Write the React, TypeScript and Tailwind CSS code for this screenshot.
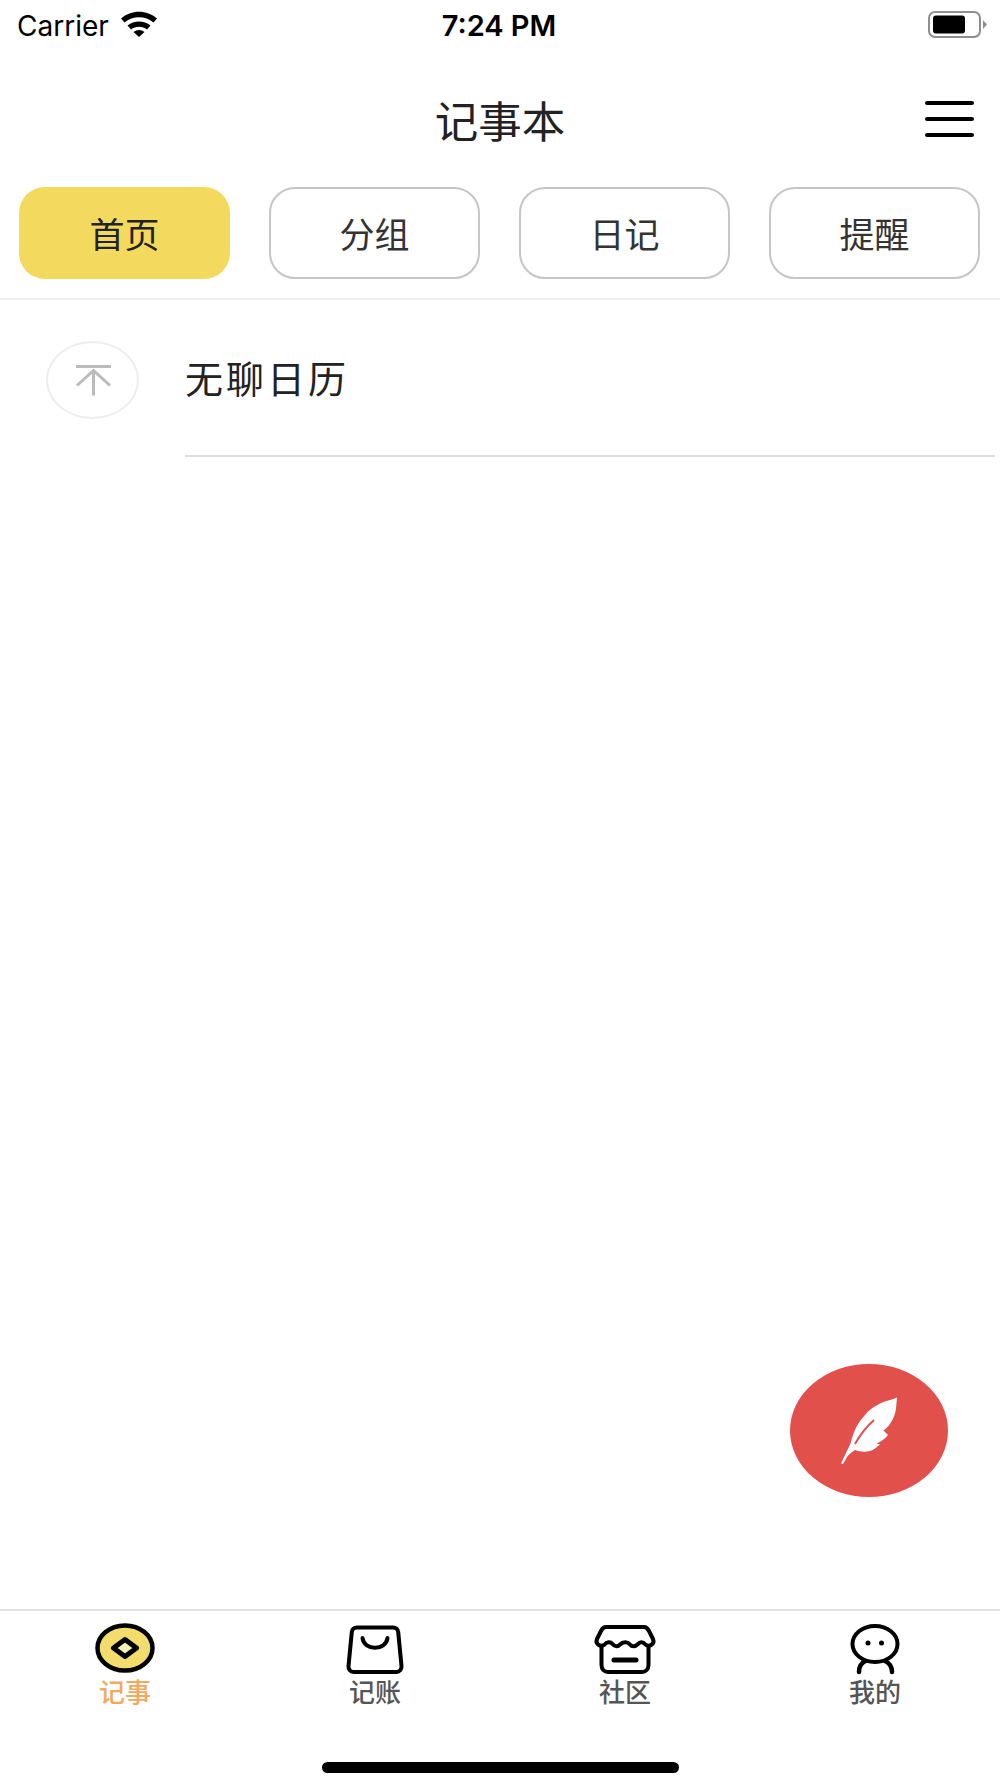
// 记事本首页
const tabs = [
  { label: '首页', active: true },
  { label: '分组', active: false },
  { label: '日记', active: false },
  { label: '提醒', active: false },
];

function WifiIcon() {
  return (
    <svg width="38" height="28" viewBox="0 0 38 28" className="ml-[11px]">
      <path d="M1 9.5C11 0.5 27 0.5 37 9.5L33.5 13.5C25.5 6.5 12.5 6.5 4.5 13.5Z" fill="#000" />
      <path d="M7.5 16.5C14 11 24 11 30.5 16.5L27 20.5C22.5 16.8 15.5 16.8 11 20.5Z" fill="#000" />
      <path d="M13.5 23C16.8 20.3 21.2 20.3 24.5 23L19 28Z" fill="#000" />
    </svg>
  );
}

function BatteryIcon() {
  return (
    <svg width="60" height="28" viewBox="0 0 60 28" className="-mr-[7px]">
      <rect x="1" y="1" width="51" height="25" rx="6" fill="none" stroke="#8e8e8e" strokeWidth="2" />
      <rect x="5" y="4.5" width="32" height="18" rx="3" fill="#000" />
      <path d="M55 9L59 13.5L55 18Z" fill="#8e8e8e" />
    </svg>
  );
}

function CoinIcon() {
  return (
    <svg width="64" height="54" viewBox="0 0 64 54">
      <ellipse cx="32" cy="26" rx="27.5" ry="22.5" fill="#f2dd6c" stroke="#000" strokeWidth="4.5" />
      <path d="M32 17.5L43.5 26L32 34.5L20.5 26Z" fill="#f9f0b8" stroke="#000" strokeWidth="5" strokeLinejoin="round" />
    </svg>
  );
}

function BagIcon() {
  return (
    <svg width="64" height="54" viewBox="0 0 64 54">
      <path d="M14 5.5H50C53 5.5 55 7.5 55.2 10L58.5 44C58.8 47.5 56.5 50 53.5 50H10.5C7.5 50 5.2 47.5 5.5 44L8.8 10C9 7.5 11 5.5 14 5.5Z" fill="none" stroke="#000" strokeWidth="4" strokeLinejoin="round" />
      <path d="M19.5 16C21 29 43 29 44.5 16" fill="none" stroke="#000" strokeWidth="4" strokeLinecap="round" />
    </svg>
  );
}

function StoreIcon() {
  return (
    <svg width="64" height="54" viewBox="0 0 64 54">
      <path d="M13 5H51C54 5 55 7 56 9L60 17C62 22 57 25 53 23C50 19.5 47 19.5 45 22C42 25 39 25 37 22.5C34.5 19.5 30 19.5 27 22.5C25 25 22 25 19.5 22C17.5 19.5 14 19.5 11 23C7 25 2 22 4 17L8 9C9 7 10 5 13 5Z" fill="none" stroke="#000" strokeWidth="4" strokeLinejoin="round" />
      <path d="M8.5 24V43C8.5 47.5 11.5 50 15 50H49C52.5 50 55.5 47.5 55.5 43V24" fill="none" stroke="#000" strokeWidth="4" />
      <path d="M21 38H43" fill="none" stroke="#000" strokeWidth="5" strokeLinecap="round" />
    </svg>
  );
}

function PersonIcon() {
  return (
    <svg width="64" height="54" viewBox="0 0 64 54">
      <ellipse cx="32" cy="22" rx="22.5" ry="18" fill="none" stroke="#000" strokeWidth="4" />
      <circle cx="25" cy="21" r="2.5" fill="#000" />
      <circle cx="38.5" cy="21" r="2.5" fill="#000" />
      <path d="M16 50C16 44 18 41 22.5 39M49 50C49 44 46.5 41 42 39" fill="none" stroke="#000" strokeWidth="4.5" strokeLinecap="round" />
    </svg>
  );
}

const navItems = [
  { label: '记事', icon: CoinIcon, color: 'text-[#f0a95f]' },
  { label: '记账', icon: BagIcon, color: 'text-[#555555]' },
  { label: '社区', icon: StoreIcon, color: 'text-[#555555]' },
  { label: '我的', icon: PersonIcon, color: 'text-[#555555]' },
];

export default function App() {
  return (
    <div className="relative w-[1000px] h-[1778px] bg-white flex flex-col overflow-hidden font-['Inter','Noto_Sans_CJK_SC',sans-serif]">
      {/* 状态栏 */}
      <div className="h-[50px] pl-[17px] pr-[19px] pt-[9px] grid grid-cols-3 items-start text-black text-[28px] leading-[34px]">
        <div className="flex items-start">
          <span>Carrier</span>
          <WifiIcon />
        </div>
        <div className="text-center text-[29px] font-semibold">7:24 PM</div>
        <div className="flex justify-end pt-[2px]">
          <BatteryIcon />
        </div>
      </div>

      {/* 标题 */}
      <div className="h-[137px] relative flex items-start justify-center pt-[45px]">
        <span className="text-[43.5px] leading-[50px] text-[#222222] font-['Noto_Sans_CJK_SC',sans-serif]">记事本</span>
        <div className="absolute left-[925px] top-[51px] w-[49px] flex flex-col gap-[12px]">
          <div className="h-[4px] rounded-full bg-black" />
          <div className="h-[4px] rounded-full bg-black" />
          <div className="h-[4px] rounded-full bg-black" />
        </div>
      </div>

      {/* 分类按钮 */}
      <div className="h-[113px] border-b-2 border-[#eeeeee] pl-[19px] pr-[20px] grid grid-cols-4 gap-[39px] items-start font-['Noto_Sans_CJK_SC',sans-serif]">
        {tabs.map(({ label, active }) => (
          <div
            key={label}
            className={
              active
                ? 'h-[92px] rounded-[26px] bg-[#f3da5f] flex items-center justify-center text-[35px] text-[#222222]'
                : 'h-[92px] rounded-[26px] bg-white border-2 border-[#c6c6c6] flex items-center justify-center text-[35px] text-[#333333]'
            }
          >
            {label}
          </div>
        ))}
      </div>

      {/* 列表 */}
      <div className="flex-1 flex items-start pl-[46px] pr-[5px] font-['Noto_Sans_CJK_SC',sans-serif]">
        <div className="mt-[41px] w-[93px] h-[78px] rounded-[50%] border-2 border-[#eeeeee] flex items-center justify-center shrink-0">
          <svg width="40" height="36" viewBox="0 0 40 36">
            <path d="M3 4.5H38M20.5 9V33.5M4 23.5L20.5 8.5L37 23.5" fill="none" stroke="#bbbbbb" strokeWidth="3" />
          </svg>
        </div>
        <div className="ml-[46px] flex-1 h-[157px] border-b-2 border-[#dddddd] pt-[55px]">
          <span className="text-[38px] leading-[44px] tracking-[3px] text-[#222222]">无聊日历</span>
        </div>
      </div>

      {/* 底部导航 */}
      <div className="h-[169px] border-t-2 border-[#e4e4e4] pt-[11px] relative font-['Noto_Sans_CJK_SC',sans-serif]">
        <div className="grid grid-cols-4">
          {navItems.map(({ label, icon: Icon, color }) => (
            <div key={label} className="flex flex-col items-center">
              <Icon />
              <span className={`text-[26px] leading-[30px] font-medium ${color}`}>{label}</span>
            </div>
          ))}
        </div>
        <div className="absolute left-[322px] top-[151px] w-[357px] h-[11px] rounded-full bg-black" />
      </div>

      {/* 新建按钮 */}
      <button className="absolute left-[790px] top-[1364px] w-[158px] h-[133px] rounded-[50%] bg-[#e2504c]">
        <svg width="158" height="133" viewBox="0 0 158 133">
          <path d="M107 33.5C101 36 95 37 90 39.5C83 43 78 47 75 51C70 56.5 67 61 65 66C63 71 61.5 75 60.5 79.5L51 99.5L53 100L57 93C59 90 62 88 65 86C69 87.5 73 88 77 87.5C81 87 83 86 85 84.5L90 80.5L86.5 79.5C91 77.5 95 75 98 71L93.5 66.5C97 64 99.5 61 101.5 57.5C104 53 105.5 49 106 44.5Z" fill="#ffffff" />
          <path d="M84 56C76 63 70 71 65 80" fill="none" stroke="#e2504c" strokeWidth="2" />
        </svg>
      </button>
    </div>
  );
}
